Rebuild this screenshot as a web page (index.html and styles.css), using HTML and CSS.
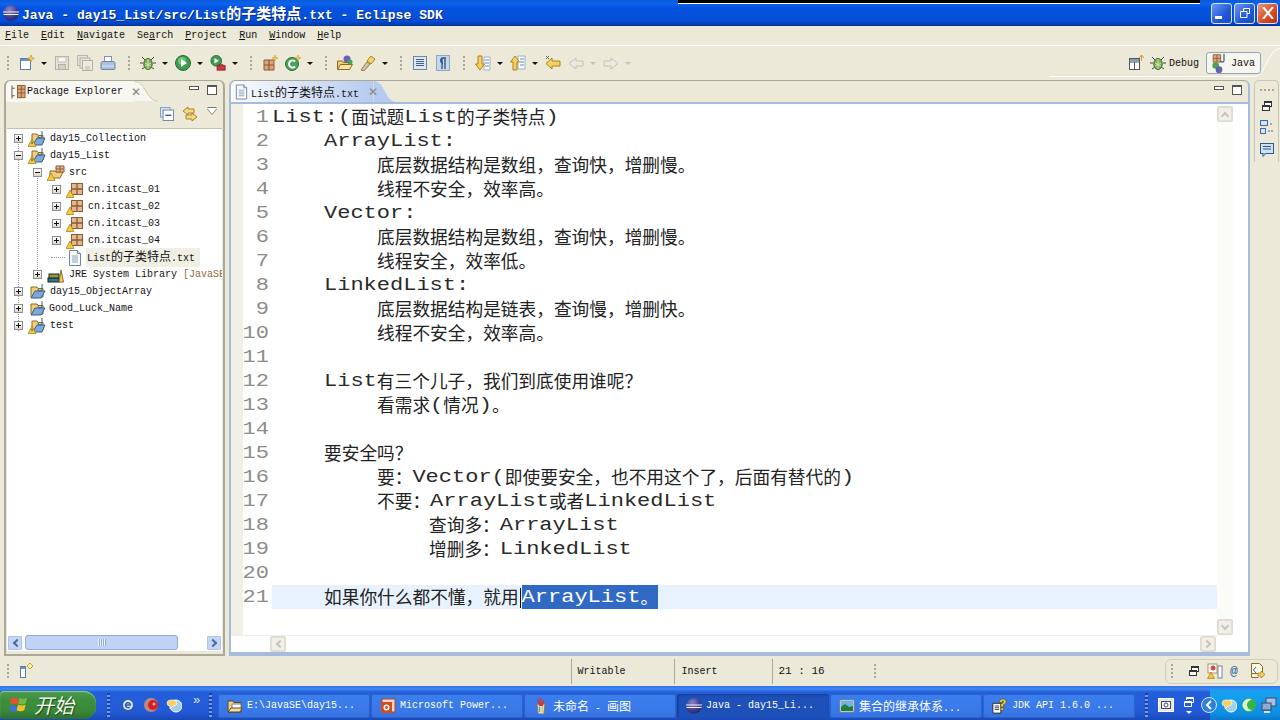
FILE: index.html
```html
<!DOCTYPE html>
<html lang="zh-CN">
<head>
<meta charset="utf-8">
<title>Java - day15_List/src/List的子类特点.txt - Eclipse SDK</title>
<link rel="stylesheet" href="styles.css">
</head>
<body>
<svg class="defs" width="0" height="0">
  <defs>
    <radialGradient id="globe" cx=".4" cy=".3" r=".8"><stop offset="0" stop-color="#8a88c8"/><stop offset=".6" stop-color="#3d3c90"/><stop offset="1" stop-color="#20205c"/></radialGradient>
    <symbol id="eclipse" viewBox="0 0 16 16"><circle cx="8" cy="8" r="7.800" fill="url(#globe)"/><path d="M0 7h16M.5 9.500h15" stroke="#f4f4ff" stroke-width="1.100"/></symbol>
    <symbol id="new" viewBox="0 0 16 16"><rect x="1.500" y="3.500" width="10" height="11" fill="#fff" stroke="#5c7fa8"/><rect x="2" y="4" width="9" height="2" fill="#6f93c0"/><path d="M12 0l1 2.500 2.500 1-2.500 1-1 2.500-1-2.500-2.500-1 2.500-1z" fill="#f5c93c" stroke="#b88a1a" stroke-width=".5"/></symbol>
    <symbol id="save" viewBox="0 0 16 16"><rect x="1.500" y="1.500" width="13" height="13" fill="#e6e4da" stroke="#b3b1a6"/><rect x="4" y="2" width="8" height="5" fill="#f7f6f1" stroke="#c0beb4"/><rect x="4.500" y="9.500" width="7" height="5" fill="#d2d0c6" stroke="#b3b1a6"/></symbol>
    <symbol id="saveall" viewBox="0 0 16 16"><rect x=".5" y=".5" width="10" height="10" fill="#e6e4da" stroke="#bbb9ae"/><rect x="3" y="3" width="10" height="10" fill="#e6e4da" stroke="#b3b1a6"/><rect x="5.500" y="5.500" width="10" height="10" fill="#ecebe3" stroke="#b3b1a6"/><rect x="8" y="11" width="5" height="4" fill="#d2d0c6"/></symbol>
    <symbol id="print" viewBox="0 0 16 16"><rect x="4.500" y="1.500" width="7" height="6" fill="#fff" stroke="#7f93ad"/><path d="M1 8.500q0-2 2-2h10q2 0 2 2v5q0 1-1 1H2q-1 0-1-1z" fill="#a9c0de" stroke="#6b86a8"/><path d="M2 11h12" stroke="#dfe9f5"/></symbol>
    <symbol id="bug" viewBox="0 0 16 16"><path d="M2 2l3 3M14 2l-3 3M0 8h3M13 8h3M2 14l3-2M14 14l-3-2" stroke="#444" stroke-width="1"/><ellipse cx="8" cy="9" rx="4.200" ry="5.500" fill="#7fae55" stroke="#3f6a2a"/><path d="M8 4v10M5 8l6 3M11 8l-6 3" stroke="#d3e4b5"/></symbol>
    <symbol id="run" viewBox="0 0 16 16"><circle cx="8" cy="8" r="7.500" fill="#3e9a4e" stroke="#2d6a3c"/><circle cx="7" cy="6" r="4" fill="#6fc27a"/><path d="M6 4l6 4-6 4z" fill="#fff"/></symbol>
    <symbol id="runext" viewBox="0 0 18 18"><circle cx="7" cy="6.500" r="6" fill="#3e9a4e" stroke="#2d6a3c"/><path d="M5 3.500l5 3-5 3z" fill="#fff"/><rect x="8" y="12" width="9" height="5" fill="#c93a3a" stroke="#8a2222"/><path d="M10.500 12v-1.500h4V12" fill="none" stroke="#8a2222"/></symbol>
    <symbol id="pkgnew" viewBox="0 0 16 16"><path d="M2 5h10v10H2z" fill="#d9a679" stroke="#8d5a32"/><path d="M7 5v10M2 10h10" stroke="#8d5a32" stroke-width="1.200"/><path d="M13 0l.8 2.200L16 3l-2.200.8L13 6l-.8-2.200L10 3l2.200-.8z" fill="#f5c93c" stroke="#b88a1a" stroke-width=".4"/></symbol>
    <symbol id="classnew" viewBox="0 0 16 16"><circle cx="7" cy="9" r="6.500" fill="#4aa35a" stroke="#2d6a3c"/><path d="M10 6.500a3.500 3.500 0 1 0 0 5" fill="none" stroke="#fff" stroke-width="2"/><path d="M13 0l.8 2.200L16 3l-2.200.8L13 6l-.8-2.200L10 3l2.200-.8z" fill="#f5c93c" stroke="#b88a1a" stroke-width=".4"/></symbol>
    <symbol id="opentype" viewBox="0 0 16 16"><path d="M.5 14.500V6h5l1 1.500h6v7z" fill="#f2cd7b" stroke="#8d6a22"/><path d="M.5 14.500l3-5h12l-3 5z" fill="#fbe3a6" stroke="#8d6a22"/><circle cx="10" cy="4" r="3.500" fill="#6a62a8"/><circle cx="13" cy="7" r="2.500" fill="#4aa35a"/></symbol>
    <symbol id="torch" viewBox="0 0 16 16"><path d="M1 15l6-8 3 2-6 7z" fill="#d8c8a0" stroke="#8a7a55"/><path d="M7 6l4-5 4 3-4 5z" fill="#f5d36b" stroke="#a98520"/></symbol>
    <symbol id="block" viewBox="0 0 16 16"><rect x="1.500" y="1.500" width="13" height="13" fill="#dfe6f0" stroke="#6b86a8"/><path d="M4 4.500h8M4 6.500h8M4 8.500h8M4 10.500h8" stroke="#3e5f8a"/></symbol>
    <symbol id="para" viewBox="0 0 16 16"><rect x="1.500" y=".5" width="13" height="15" fill="#c7d6e8" stroke="#8ea6c4"/><path d="M7 14V3M10 14V3M11 3H7a3 3 0 0 0 0 5h1" fill="none" stroke="#2e5a8c" stroke-width="1.400"/></symbol>
    <symbol id="nextann" viewBox="0 0 16 16"><path d="M9 2h6v13H9z" fill="#fff" stroke="#9fb0c6"/><path d="M10 5h4M10 8h4M10 11h4" stroke="#5b87bd"/><path d="M3 1h4v8h2.500L5 15 .5 9H3z" fill="#f5cf62" stroke="#a98520"/></symbol>
    <symbol id="prevann" viewBox="0 0 16 16"><path d="M8 1h7v13H8z" fill="#fff" stroke="#9fb0c6"/><path d="M10 4h4M10 7h4M10 10h4" stroke="#5b87bd"/><path d="M3 15h4V7h2.500L5 1 .5 7H3z" fill="#f5cf62" stroke="#a98520"/></symbol>
    <symbol id="lastedit" viewBox="0 0 16 16"><path d="M7 3v3h8v5H7v3L1 8.500z" fill="#f5cf62" stroke="#a98520"/><path d="M1 1l3 3M4 1L1 4" stroke="#4a7a3a"/></symbol>
    <symbol id="back" viewBox="0 0 16 16"><path d="M8 3v3h7v5H8v3L1 8.500z" fill="#eceae0" stroke="#c5c3b8"/></symbol>
    <symbol id="forward" viewBox="0 0 16 16"><path d="M8 3v3H1v5h7v3l7-5.500z" fill="#eceae0" stroke="#c5c3b8"/></symbol>
    <symbol id="openpersp" viewBox="0 0 16 16"><rect x="1.500" y="3.500" width="10" height="11" fill="#fff" stroke="#555"/><path d="M1.500 7h10M6.500 7v7.500" stroke="#555"/><rect x="2" y="4" width="9" height="2.500" fill="#7b9cc6"/><path d="M13.500 0v6M11 3l2.500-3L16 3" fill="none" stroke="#d69c1d"/></symbol>
    <symbol id="javapersp" viewBox="0 0 18 24"><path d="M2 2h9v9H2z" fill="#d9a679" stroke="#8d5a32"/><path d="M6.500 2v9M2 6.500h9" stroke="#8d5a32"/><circle cx="5" cy="15" r="4" fill="#4aa35a"/><circle cx="9" cy="20" r="4" fill="#6a62a8"/><path d="M15 1v8a2 2 0 0 1-4 0" fill="none" stroke="#4a5f80" stroke-width="1.500"/></symbol>
    <symbol id="pkgtree" viewBox="0 0 16 16"><path d="M1 1v14M1 4h3M1 12h3" stroke="#555"/><rect x="7" y="1" width="8" height="13" fill="#d9a679" stroke="#8d5a32"/><path d="M11 1v13M7 5h8M7 9h8" stroke="#8d5a32"/></symbol>
    <symbol id="doc" viewBox="0 0 16 16"><path d="M2.500.5h8l3 3v12h-11z" fill="#fafafa" stroke="#6f86a3"/><path d="M10.500.5v3h3" fill="#dfe6f0" stroke="#6f86a3"/><path d="M5 6h6M5 8h6M5 10h6M5 12h6" stroke="#8ea4c0"/></symbol>
    <symbol id="projw" viewBox="0 0 18 16"><path d="M4 7V3h5l1 1.500h5V12H4z" fill="#f2cd7b" stroke="#8d6a22"/><path d="M6 12l3-5h8l-3 7H6z" fill="#7da9d8" stroke="#35608f"/><path d="M14 0v5a2 2 0 0 1-4 0" fill="none" stroke="#35608f"/><path d="M4 8l4 7.500H0z" fill="#f5c93c" stroke="#a47a10" stroke-width=".7"/><path d="M4 10.500v2.500" stroke="#5a3f00"/></symbol>
    <symbol id="proj" viewBox="0 0 18 16"><path d="M3 13V3h6l1 1.500h5V13z" fill="#f2cd7b" stroke="#8d6a22"/><path d="M3 14l4-7h10l-4 7z" fill="#7da9d8" stroke="#35608f"/><path d="M14 0v5a2 2 0 0 1-4 0" fill="none" stroke="#35608f"/></symbol>
    <symbol id="srcw" viewBox="0 0 18 16"><path d="M3 13V6h5l1 1h7l-3 6z" fill="#f2cd7b" stroke="#8d6a22"/><path d="M9 1h8v6H9zM13 1v6M9 4h8" fill="#e3b891" stroke="#8d5a32"/><path d="M4 8l4 7.500H0z" fill="#f5c93c" stroke="#a47a10" stroke-width=".7"/></symbol>
    <symbol id="pkgw" viewBox="0 0 18 16"><rect x="5.500" y="1.500" width="11" height="11" fill="#e3b891" stroke="#8d5a32"/><path d="M11 1.500v11M5.500 7h11" stroke="#8d5a32" stroke-width="1.300"/><path d="M4 8l4 7.500H0z" fill="#f5c93c" stroke="#a47a10" stroke-width=".7"/></symbol>
    <symbol id="books" viewBox="0 0 16 16"><rect x="0" y="11" width="11" height="4" fill="#2e7a8c" stroke="#222"/><rect x="1" y="7" width="10" height="4" fill="#8a9a3a" stroke="#222"/><path d="M11 15l2-12 2.500 12z" fill="#f5cf62" stroke="#8d6a22"/></symbol>
    <symbol id="collapse" viewBox="0 0 16 16"><rect x=".5" y=".5" width="11" height="11" fill="#d5e1f0" stroke="#7f9cc0"/><rect x="3.500" y="3.500" width="12" height="12" fill="#fff" stroke="#5c7fa8"/><path d="M6 9.500h7" stroke="#2e5a8c" stroke-width="1.500"/></symbol>
    <symbol id="link" viewBox="0 0 16 16"><path d="M6 1L1 5l5 4V7h6V3H6z" fill="#f5d98a" stroke="#a98520"/><path d="M10 7l5 4-5 4v-2H4V9h6z" fill="#f5d98a" stroke="#a98520"/></symbol>
    <symbol id="restore" viewBox="0 0 12 12"><rect x="3.500" y="1.500" width="7" height="5" fill="#fff" stroke="#333"/><rect x="1.500" y="5.500" width="7" height="5" fill="#fff" stroke="#333"/><path d="M1.500 6.500h7M3.500 2.500h7" stroke="#333"/></symbol>
    <symbol id="restorew" viewBox="0 0 12 12"><path d="M3.500 4V1.500h7v5H8.500M1.500 5.500h7v5h-7z" fill="none" stroke="#fff"/><path d="M1.500 6.500h7M3.500 2.500h7" stroke="#fff"/></symbol>
    <symbol id="outline" viewBox="0 0 16 16"><rect x="1.500" y="1.500" width="7" height="5" fill="#d5e3f5" stroke="#3e6ea8"/><rect x="1.500" y="9.500" width="5" height="5" fill="#d5e3f5" stroke="#3e6ea8"/><path d="M9 12h5M11 5h3" stroke="#3e6ea8" stroke-dasharray="2 1"/></symbol>
    <symbol id="task" viewBox="0 0 16 16"><rect x="1.500" y="1.500" width="13" height="10" fill="#cfe0f5" stroke="#2e5a8c"/><path d="M4 4.500h8M4 7h8" stroke="#2e5a8c"/><path d="M4 11.500v3l3-3" fill="#cfe0f5" stroke="#2e5a8c"/></symbol>
    <symbol id="fastnew" viewBox="0 0 16 16"><rect x="1.500" y="3.500" width="5" height="11" fill="#fff" stroke="#5c7fa8"/><rect x="2" y="4" width="4" height="2" fill="#6f93c0"/><path d="M11 0l3 3-3 3-3-3z" fill="#fff3b0" stroke="#d0a020"/></symbol>
    <symbol id="prog" viewBox="0 0 16 16"><rect x="1" y="1" width="9" height="9" fill="#fff" stroke="#b09060"/><circle cx="6" cy="5" r="2.500" fill="#d84a4a"/><rect x="11" y="3" width="4" height="12" fill="#fff" stroke="#6f86a3"/><path d="M4 9l3.500 6.500H.5z" fill="#f5c93c" stroke="#a47a10" stroke-width=".7"/></symbol>
    <symbol id="changes" viewBox="0 0 16 16"><path d="M1.500.5h8l3 3v7h-11zM1.500 10.500v4h7" fill="#fffce8" stroke="#8a6a20"/><path d="M6 4L3.500 7 6 10" fill="none" stroke="#3e6ea8"/><path d="M8 10h3V8l4 3.500L11 15v-2H8z" fill="#f5cf62" stroke="#a98520" stroke-width=".8"/></symbol>
    <symbol id="xp" viewBox="0 0 20 20"><path d="M1 6q4-2 8 0l-1 6q-4-2-8 0z" fill="#e8522f" transform="translate(0 -2)"/><path d="M10 3q4 2 8 0l-1.500 6q-4 2-8 0z" fill="#73b843"/><path d="M0 12q4-2 8 0l-1 6q-4-2-8 0z" fill="#3f6fd8"/><path d="M8.500 10q4 2 8 0L15 16q-4 2-8 0z" fill="#f5c21b"/></symbol>
    <symbol id="ie" viewBox="0 0 16 16"><rect x="1" y="2" width="13" height="13" fill="#2d5cb5" rx="2"/><circle cx="8" cy="8" r="5" fill="#dce9fa"/><path d="M5.500 8h5a2.500 2.500 0 1 0-.8 2" fill="none" stroke="#2d5cb5" stroke-width="1.500"/></symbol>
    <symbol id="redball" viewBox="0 0 16 16"><circle cx="8" cy="8" r="7" fill="#b98a80"/><circle cx="10" cy="8" r="5" fill="#d81e24"/><circle cx="11" cy="7" r="1.500" fill="#ffb0b0"/></symbol>
    <symbol id="msg" viewBox="0 0 16 16"><circle cx="10" cy="9" r="6" fill="#9fd0f0" stroke="#fff"/><path d="M1 6q0-3 4-3h2q4 0 4 3t-4 3L4 12V9Q1 9 1 6z" fill="#f5cf62" stroke="#fff" stroke-width=".6"/></symbol>
    <symbol id="foldertb" viewBox="0 0 16 16"><path d="M1 14V3h5l1 1.500h7V14z" fill="#ecd08a" stroke="#5b4a20"/><path d="M5 6h9v7H5z" fill="#fff" stroke="#7f7f7f"/><path d="M1 14l3-4h11l-2 4z" fill="#f5dc9e" stroke="#5b4a20"/></symbol>
    <symbol id="ppt" viewBox="0 0 16 16"><rect x="2" y="1" width="13" height="13" fill="#e8d5c8" stroke="#b7471c"/><rect x="1" y="4" width="11" height="11" fill="#d14d1d"/><circle cx="6.500" cy="9.500" r="3" fill="#fff"/><circle cx="6.500" cy="9.500" r="1.400" fill="#d14d1d"/></symbol>
    <symbol id="paint" viewBox="0 0 16 16"><path d="M4 6h8l-1 10H5z" fill="#d8d8d8" stroke="#777"/><path d="M5 1l2 7M8 0v8M11 2L9 8" stroke="#d8342a" stroke-width="1.500"/><path d="M6 9h1v5H6z" fill="#4aa35a"/><path d="M9 9h1v5H9z" fill="#f5c21b"/></symbol>
    <symbol id="pic" viewBox="0 0 16 16"><rect x="1" y="2" width="14" height="12" fill="#fff" stroke="#888"/><rect x="2" y="3" width="12" height="6" fill="#6fb4e0"/><path d="M2 13V9l4-3 4 3 4-1v5z" fill="#1f7d3d"/></symbol>
    <symbol id="help" viewBox="0 0 18 18"><path d="M1 6h9v11H1z" fill="#fff" stroke="#222"/><path d="M3 9h5M3 11h5M3 13h5" stroke="#333"/><path d="M8 5q0-4 4-4t4 3.500q0 2-3 3v2.500h-3V6.500q3-.5 3-2 0-1-1-1t-1 1.500zM10 11h3v3h-3z" fill="#f5d020" stroke="#222" stroke-width=".5"/></symbol>
    <symbol id="ql" viewBox="0 0 16 16"><rect x=".5" y="1.500" width="15" height="13" fill="#e8e8e8" stroke="#fff"/><rect x="3.500" y="4.500" width="9" height="7" fill="#fff" stroke="#3a4a6a"/><circle cx="8" cy="8" r="2" fill="none" stroke="#3a4a6a"/></symbol>
    <symbol id="trayback" viewBox="0 0 16 16"><circle cx="8" cy="8" r="7.500" fill="#2f7fe0" stroke="#fff" stroke-width=".8"/><path d="M10 4L6 8l4 4" fill="none" stroke="#fff" stroke-width="2"/></symbol>
    <symbol id="greenball" viewBox="0 0 16 16"><circle cx="8" cy="8" r="7" fill="#36b24a"/><path d="M11 3a6 6 0 1 0 0 10 5 5 0 0 1 0-10z" fill="#d6f5d0"/></symbol>
    <symbol id="net" viewBox="0 0 16 16"><rect x="5" y="1" width="10" height="8" fill="#a8c0e8" stroke="#3a4a6a"/><rect x="1" y="6" width="9" height="7" fill="#8fa9d8" stroke="#3a4a6a"/><path d="M3 15h6" stroke="#ddd" stroke-width="2"/></symbol>
  </defs>
</svg>

<div class="window">
  <header class="titlebar">
    <svg class="ic16 title-icon"><use href="#eclipse"/></svg>
    <span class="title-text">Java - day15_List/src/List<span class="title-cjk">的子类特点</span>.txt - Eclipse SDK</span>
    <div class="capture-line"></div>
    <div class="winbtns">
      <button class="winbtn"><span class="glyph-min"></span></button>
      <button class="winbtn"><svg class="glyph-res" viewBox="0 0 12 12"><path d="M4.500 4.500V1.500h6v5H8M1.500 4.500h6.500v6h-6.500z" fill="none" stroke="#fff"/></svg></button>
      <button class="winbtn close"><svg class="glyph-res" viewBox="0 0 12 12"><path d="M1 0l10 12M11 0L1 12" stroke="#fff" stroke-width="2"/></svg></button>
    </div>
  </header>

  <nav class="menubar">
    <span><u>F</u>ile</span><span><u>E</u>dit</span><span><u>N</u>avigate</span><span>Se<u>a</u>rch</span><span><u>P</u>roject</span><span><u>R</u>un</span><span><u>W</u>indow</span><span><u>H</u>elp</span>
  </nav>

  <div class="toolbar">
    <i class="grip"></i>
    <span class="tool"><svg class="ic16"><use href="#new"/></svg></span><span class="dd"></span>
    <span class="tool"><svg class="ic16"><use href="#save"/></svg></span>
    <span class="tool"><svg class="ic16"><use href="#saveall"/></svg></span>
    <span class="tool"><svg class="ic16"><use href="#print"/></svg></span>
    <i class="grip wide"></i>
    <span class="tool"><svg class="ic16"><use href="#bug"/></svg></span><span class="dd"></span>
    <span class="tool"><svg class="ic16"><use href="#run"/></svg></span><span class="dd"></span>
    <span class="tool"><svg class="ic16"><use href="#runext"/></svg></span><span class="dd"></span>
    <i class="grip wide"></i>
    <span class="tool"><svg class="ic16"><use href="#pkgnew"/></svg></span>
    <span class="tool"><svg class="ic16"><use href="#classnew"/></svg></span><span class="dd"></span>
    <i class="grip wide"></i>
    <span class="tool"><svg class="ic16"><use href="#opentype"/></svg></span>
    <span class="tool"><svg class="ic16"><use href="#torch"/></svg></span><span class="dd"></span>
    <i class="grip wide"></i>
    <span class="tool"><svg class="ic16"><use href="#block"/></svg></span>
    <span class="tool"><svg class="ic16"><use href="#para"/></svg></span>
    <i class="grip wide"></i>
    <span class="tool"><svg class="ic16"><use href="#nextann"/></svg></span><span class="dd"></span>
    <span class="tool"><svg class="ic16"><use href="#prevann"/></svg></span><span class="dd"></span>
    <span class="tool"><svg class="ic16"><use href="#lastedit"/></svg></span>
    <span class="tool"><svg class="ic16"><use href="#back"/></svg></span><span class="dd off"></span>
    <span class="tool"><svg class="ic16"><use href="#forward"/></svg></span><span class="dd off"></span>

    <div class="persp">
      <svg class="persp-curve" viewBox="0 0 420 32"><path d="M190 30.500H393C407 30.500 407 2.500 421 2.500" fill="none" stroke="#fff"/></svg>
      <svg class="ic16"><use href="#openpersp"/></svg>
      <span class="persp-debug"><svg class="ic16"><use href="#bug"/></svg>Debug</span>
      <span class="persp-java"><svg class="ic-java"><use href="#javapersp"/></svg>Java</span>
    </div>
  </div>

  <main class="workspace">
    <section class="panel left">
      <div class="tabrow">
        <div class="tab plain"><svg class="ic16"><use href="#pkgtree"/></svg><span>Package Explorer</span><b class="x">✕</b></div>
        <svg class="tabcurve" viewBox="0 0 24 22"><path d="M0 0C12 0 12 21 24 21H0z" fill="#f8f7f1"/><path d="M0 .5C12 .5 12 21 24 21" fill="none" stroke="#cdcbbc"/></svg>
        <div class="winctl"><i class="ctl-min"></i><i class="ctl-max"></i></div>
      </div>
      <div class="viewbar">
        <svg class="ic-collapse"><use href="#collapse"/></svg>
        <svg class="ic16"><use href="#link"/></svg>
        <i class="viewmenu"></i>
      </div>
      <div class="tree">
        <i class="guide g-root"></i><i class="guide g-src"></i>
        <div class="row d0"><i class="exp plus"></i><svg class="ic-tree"><use href="#projw"/></svg><span>day15_Collection</span></div>
        <div class="row d0"><i class="exp"></i><svg class="ic-tree"><use href="#projw"/></svg><span>day15_List</span></div>
        <div class="row d1"><i class="exp"></i><svg class="ic-tree"><use href="#srcw"/></svg><span>src</span></div>
        <div class="row d2"><i class="exp plus"></i><svg class="ic-tree"><use href="#pkgw"/></svg><span>cn.itcast_01</span></div>
        <div class="row d2"><i class="exp plus"></i><svg class="ic-tree"><use href="#pkgw"/></svg><span>cn.itcast_02</span></div>
        <div class="row d2"><i class="exp plus"></i><svg class="ic-tree"><use href="#pkgw"/></svg><span>cn.itcast_03</span></div>
        <div class="row d2"><i class="exp plus"></i><svg class="ic-tree"><use href="#pkgw"/></svg><span>cn.itcast_04</span></div>
        <div class="row d2"><i class="exp none"></i><svg class="ic-tree"><use href="#doc"/></svg><span class="sel">List<span class="cjk">的子类特点</span>.txt</span></div>
        <div class="row d1"><i class="exp plus"></i><svg class="ic-tree"><use href="#books"/></svg><span>JRE System Library <em>[JavaSE</em></span></div>
        <div class="row d0"><i class="exp plus"></i><svg class="ic-tree"><use href="#proj"/></svg><span>day15_ObjectArray</span></div>
        <div class="row d0"><i class="exp plus"></i><svg class="ic-tree"><use href="#proj"/></svg><span class="tight">Good_Luck_Name</span></div>
        <div class="row d0"><i class="exp plus"></i><svg class="ic-tree"><use href="#projw"/></svg><span>test</span></div>
      </div>
      <div class="hscroll">
        <i class="sb-btn"><b class="chev left-chev"></b></i>
        <i class="sb-thumb"><b class="thumb-grip"></b></i>
        <i class="sb-btn end"><b class="chev right-chev"></b></i>
      </div>
    </section>

    <section class="panel right">
      <div class="tabrow">
        <div class="tab active"><svg class="ic16"><use href="#doc"/></svg><span>List<span class="cjk">的子类特点</span>.txt</span><b class="x">✕</b></div>
        <svg class="tabcurve" viewBox="0 0 24 22"><path d="M0 0C12 0 12 22 24 22H0z" fill="#b6cbef"/></svg>
        <div class="winctl"><i class="ctl-min"></i><i class="ctl-max"></i></div>
      </div>
      <div class="editor">
        <div class="edit-main">
          <div class="codearea">
            <div class="line"><b>1</b><p class="code"><span class="l">List:(</span>面试题<span class="l">List</span>的子类特点<span class="l">)</span></p></div>
            <div class="line"><b>2</b><p class="code t1"><span class="l">ArrayList:</span></p></div>
            <div class="line"><b>3</b><p class="code t2">底层数据结构是数组，查询快，增删慢。</p></div>
            <div class="line"><b>4</b><p class="code t2">线程不安全，效率高。</p></div>
            <div class="line"><b>5</b><p class="code t1"><span class="l">Vector:</span></p></div>
            <div class="line"><b>6</b><p class="code t2">底层数据结构是数组，查询快，增删慢。</p></div>
            <div class="line"><b>7</b><p class="code t2">线程安全，效率低。</p></div>
            <div class="line"><b>8</b><p class="code t1"><span class="l">LinkedList:</span></p></div>
            <div class="line"><b>9</b><p class="code t2">底层数据结构是链表，查询慢，增删快。</p></div>
            <div class="line"><b>10</b><p class="code t2">线程不安全，效率高。</p></div>
            <div class="line"><b>11</b><p class="code"></p></div>
            <div class="line"><b>12</b><p class="code t1"><span class="l">List</span>有三个儿子，我们到底使用谁呢？</p></div>
            <div class="line"><b>13</b><p class="code t2">看需求<span class="l">(</span>情况<span class="l">)</span>。</p></div>
            <div class="line"><b>14</b><p class="code"></p></div>
            <div class="line"><b>15</b><p class="code t1">要安全吗？</p></div>
            <div class="line"><b>16</b><p class="code t2">要：<span class="l">Vector(</span>即使要安全，也不用这个了，后面有替代的<span class="l">)</span></p></div>
            <div class="line"><b>17</b><p class="code t2">不要：<span class="l">ArrayList</span>或者<span class="l">LinkedList</span></p></div>
            <div class="line"><b>18</b><p class="code t3">查询多：<span class="l">ArrayList</span></p></div>
            <div class="line"><b>19</b><p class="code t3">增删多：<span class="l">LinkedList</span></p></div>
            <div class="line"><b>20</b><p class="code"></p></div>
            <div class="line"><b>21</b><p class="code t1 current">如果你什么都不懂，就用<span class="caret"></span><span class="select"><span class="l">ArrayList</span>。</span></p></div>
          </div>
          <div class="vscroll">
            <i class="sb-btn off"><b class="chev up-chev"></b></i>
            <i class="sb-btn off down"><b class="chev down-chev"></b></i>
          </div>
        </div>
        <div class="hscroll edit-h">
          <i class="sb-btn off"><b class="chev left-chev"></b></i>
          <i class="sb-btn off end"><b class="chev right-chev"></b></i>
        </div>
      </div>
    </section>

    <aside class="fastview">
      <i class="fv-grip"></i>
      <svg class="ic12"><use href="#restore"/></svg>
      <svg class="ic16"><use href="#outline"/></svg>
      <svg class="ic16"><use href="#task"/></svg>
    </aside>
  </main>

  <footer class="status">
    <i class="grip"></i>
    <svg class="ic16 fast-new"><use href="#fastnew"/></svg>
    <span class="st writable">Writable</span>
    <span class="st insert">Insert</span>
    <span class="st pos">21 : 16</span>
    <i class="grip st-grip"></i>
    <div class="trimright">
      <i class="grip"></i>
      <svg class="ic12"><use href="#restore"/></svg>
      <svg class="ic16"><use href="#prog"/></svg>
      <span class="at">@</span>
      <svg class="ic16"><use href="#changes"/></svg>
    </div>
  </footer>

  <div class="taskbar">
    <div class="start"><svg class="ic-start"><use href="#xp"/></svg><span>开始</span></div>
    <i class="tgrip first"></i>
    <div class="quick">
      <svg class="ic16"><use href="#ie"/></svg>
      <svg class="ic16"><use href="#redball"/></svg>
      <svg class="ic16"><use href="#msg"/></svg>
      <span class="more">»</span>
    </div>
    <i class="tgrip mid"></i>
    <div class="tasks">
      <div class="task"><svg class="ic16"><use href="#foldertb"/></svg><span>E:\JavaSE\day15...</span></div>
      <div class="task"><svg class="ic16"><use href="#ppt"/></svg><span>Microsoft Power...</span></div>
      <div class="task"><svg class="ic16"><use href="#paint"/></svg><span><span class="cjk">未命名</span> - <span class="cjk">画图</span></span></div>
      <div class="task on"><svg class="ic16"><use href="#eclipse"/></svg><span>Java - day15_Li...</span></div>
      <div class="task"><svg class="ic16"><use href="#pic"/></svg><span><span class="cjk">集合的继承体系</span>...</span></div>
      <div class="task"><svg class="ic16"><use href="#help"/></svg><span>JDK API 1.6.0 ...</span></div>
    </div>
    <i class="tgrip last"></i>
    <div class="tb-extra">
      <svg class="ic16"><use href="#ql"/></svg>
      <div class="tb-restore"><svg class="ic12"><use href="#restorew"/></svg><i class="tb-arrow"></i></div>
    </div>
    <div class="tray">
      <svg class="ic16 tray-back"><use href="#trayback"/></svg>
      <svg class="ic16"><use href="#msg"/></svg>
      <svg class="ic16"><use href="#greenball"/></svg>
      <svg class="ic16"><use href="#net"/></svg>
    </div>
  </div>
</div>
</body>
</html>
```
FILE: styles.css
```css
* { box-sizing: border-box; }
html, body { margin: 0; padding: 0; width: 1280px; height: 720px; overflow: hidden; }
body { font-family: "Liberation Mono", "Noto Sans CJK SC", monospace; font-size: 10px; color: #111; background: #ece9d8; }
.defs { position: absolute; }
svg { display: block; flex: none; }
i, b, em { font-style: normal; font-weight: normal; }
.ic16 { width: 16px; height: 16px; }
.ic12 { width: 12px; height: 12px; }
.cjk { font-size: 12px; font-family: "Noto Sans CJK SC", sans-serif; }
.window { width: 1280px; height: 720px; display: flex; flex-direction: column; }

/* title bar */
.titlebar { height: 26px; flex: none; display: flex; align-items: center; padding-left: 3px; position: relative;
  background: linear-gradient(#0a5ad8 0, #0d63ee 4px, #0552e0 8px, #0350d8 20px, #0340b8 24px, #02309a 26px); }
.title-icon { margin-right: 3px; }
.title-text { font-size: 13.1px; font-weight: 700; color: #fff; white-space: pre; text-shadow: 1px 1px 0 #0a2a80; }
.title-cjk { font-size: 15px; }
.capture-line { position: absolute; left: 678px; top: 0; width: 522px; height: 3px; background: #000; box-shadow: 0 1px 0 #fff; }
.winbtns { margin-left: auto; display: flex; gap: 2px; padding-right: 2px; }
.winbtn { width: 21px; height: 21px; padding: 0; border: 1px solid #d8e4f8; border-radius: 3px; background: linear-gradient(135deg, #6f97f0, #2158d8 60%, #1a48c0); display: flex; align-items: center; justify-content: center; }
.winbtn.close { background: linear-gradient(135deg, #e89478, #d84a22 60%, #b83210); }
.glyph-min { width: 7px; height: 3px; background: #fff; margin: 9px 6px 0 0; }
.glyph-res { width: 12px; height: 12px; }

/* menu */
.menubar { height: 20px; flex: none; display: flex; align-items: center; padding-left: 5px; gap: 12px; border-bottom: 1px solid #fff; }

/* toolbar */
.toolbar { height: 32px; flex: none; display: flex; align-items: center; padding-top: 2px; position: relative; }
.grip { width: 2px; height: 15px; flex: none; margin-left: 7px; margin-right: 6.5px; background: repeating-linear-gradient(#a8a595 0 2px, transparent 2px 4px); }
.grip.wide { margin-left: 8px; margin-right: 7px; }
.tool { width: 23px; height: 24px; display: flex; align-items: center; justify-content: center; flex: none; }
.dd { width: 12px; height: 24px; flex: none; display: flex; align-items: center; padding-left: 1px; }
.dd::after { content: ""; border: 3px solid transparent; border-top: 3px solid #111; border-bottom: 0; margin-left: 1px; }
.dd.off::after { border-top-color: #c5c3b8; }
.persp { position: absolute; right: 0; top: 0; height: 32px; width: 420px; display: flex; align-items: center; padding: 2px 0 0 268px; }
.persp-curve { position: absolute; right: 0; top: 0; width: 420px; height: 32px; }
.persp-debug { display: flex; align-items: center; gap: 3px; margin-left: 6px; position: relative; }
.persp-java { width: 55px; height: 22px; margin-left: 7px; display: flex; align-items: center; gap: 4px; padding-left: 4px; border: 1px solid #8ea4b8; border-radius: 3px; background: #f6f5ee; position: relative; }
.ic-java { width: 16px; height: 20px; }

/* workspace */
.workspace { height: 578px; flex: none; display: flex; padding: 2px 0 0 4px; gap: 4px; }
.panel { display: flex; flex-direction: column; border: 1px solid #aca899; border-radius: 6px 6px 0 0; height: 576px; }
.panel.left { width: 221px; padding: 0 1px 3px 1px; border-width: 1px 2px 2px 2px; }
.panel.right { width: 1021px; border: 2px solid #a9bbdc; border-top: 1px solid #aca899; border-bottom-width: 4px; }
.tabrow { height: 21px; flex: none; display: flex; position: relative; margin: 0 -1px; }
.panel.right .tabrow { margin: 0; }
.tab { display: flex; align-items: center; flex: none; height: 21px; border-radius: 6px 0 0 0; position: relative; z-index: 1; }
.tab.plain { width: 128px; background: #f8f7f1; padding-left: 5px; gap: 1px; }
.tab.active { width: 142px; background: linear-gradient(90deg, #fbfcfe, #b6cbef); padding-left: 3px; gap: 2px; }
.tab span { white-space: nowrap; }
.tab .ic16 { width: 15px; height: 16px; }
.tabcurve { width: 24px; height: 21px; }
.x { margin-left: 7px; color: #8a8878; font-size: 12px; font-family: "DejaVu Sans", sans-serif; }
.winctl { margin-left: auto; display: flex; align-items: center; gap: 8px; padding: 0 6px 4px 0; }
.ctl-min { width: 10px; height: 4px; border: 1px solid #555; background: #fff; margin-top: -4px; }
.ctl-max { width: 10px; height: 10px; border: 1px solid #555; background: #fff; border-top-width: 2px; }
.viewbar { height: 27px; flex: none; display: flex; align-items: center; padding: 0 4px 3px 0; justify-content: flex-end; gap: 8px; border-bottom: 1px solid #c5c2b0; }
.ic-collapse { width: 14px; height: 14px; }
.viewmenu { width: 0; height: 0; border: 5px solid transparent; border-top: 6px solid #fff; border-bottom: 0; filter: drop-shadow(0 1px 0 #777) drop-shadow(0 -1px 0 #777); margin: 0 1px 6px 1px; }

/* tree */
.tree { flex: 1; background: #fff; padding-top: 1px; overflow: hidden; position: relative; }
.row { height: 17px; display: flex; align-items: center; white-space: nowrap; position: relative; }
.d0 { padding-left: 7px; }
.d1 { padding-left: 26px; }
.d2 { padding-left: 45px; }
.exp { width: 9px; height: 9px; flex: none; border: 1px solid #8a8f98; background: linear-gradient(#fff, #dcd8c8); position: relative; margin-right: 5px; }
.exp::before { content: ""; position: absolute; left: 1px; top: 3px; width: 5px; height: 1px; background: #111; }
.exp.plus::after { content: ""; position: absolute; left: 3px; top: 1px; width: 1px; height: 5px; background: #111; }
.exp.none { border: 0; background: none; }
.exp.none::before { left: -1px; top: 4px; width: 14px; height: 0; background: none; border-top: 1px dotted #999; }
.ic-tree { width: 18px; height: 16px; margin-right: 4px; }
.row em { color: #8a6d3b; }
.tight { margin-left: -1px; }
.sel { background: #f0efe4; padding: 1px 5px 1px 1px; margin-left: -2px; line-height: 14px; }
.guide { position: absolute; width: 0; border-left: 1px dotted #999; }
.g-root { left: 11px; top: 12px; height: 190px; }
.g-src { left: 30px; top: 44px; height: 102px; }

/* scrollbars */
.hscroll { height: 16px; flex: none; background: #fff; display: flex; }
.sb-btn { width: 16px; height: 16px; flex: none; border: 1px solid #fff; border-radius: 2px; background: #c5d5f5; box-shadow: inset 0 0 0 1px #aec3ec; display: flex; align-items: center; justify-content: center; }
.sb-btn.off { background: #f1f0e8; box-shadow: inset 0 0 0 1px #e2e0d4; border-color: #dedccf; }
.sb-btn.end { margin-left: auto; }
.sb-thumb { width: 153px; margin-left: 2px; height: 15px; background: #c0d2f6; border: 1px solid #8fa9dc; border-radius: 3px; display: flex; align-items: center; justify-content: center; }
.thumb-grip { width: 8px; height: 7px; background: repeating-linear-gradient(90deg, #eef3fd 0 1px, #8fa9dc 1px 2px); }
.chev { width: 6px; height: 6px; border: solid #4a6ca8; border-width: 2px 0 0 2px; }
.off .chev { border-color: #c8c6ba; }
.left-chev { transform: rotate(-45deg); margin-left: 3px; }
.right-chev { transform: rotate(135deg); margin-right: 3px; }
.up-chev { transform: rotate(45deg); margin-top: 3px; }
.down-chev { transform: rotate(225deg); margin-bottom: 3px; }

/* editor */
.editor { flex: 1; display: flex; flex-direction: column; background: #fff; border-top: 2px solid #a9bbdc; min-height: 0; }
.edit-main { flex: 1; display: flex; min-height: 0; padding: 0 15px 0 12px; background: linear-gradient(90deg, #f1f0e6 12px, #fff 12px); }
.codearea { flex: 1; padding-top: 1px; border-bottom: 1px solid #f0efe8; background: #fff; overflow: hidden; }
.line { height: 24px; display: flex; align-items: center; white-space: nowrap; position: relative; }
.line b { width: 26px; flex: none; text-align: right; font-size: 22px; color: #8c8c8c; line-height: 24px; transform: translateY(1px) scaleY(.82); white-space: nowrap; direction: rtl; }
.code { margin: 0 0 0 3px; padding: 0 0 2px 0; font-family: "Noto Sans CJK SC", sans-serif; font-size: 17.7px; line-height: 22px; height: 24px; flex: 1; color: #222; display: flex; align-items: center; }
.l { display: inline-block; font-family: "Liberation Mono", monospace; font-size: 22px; transform: translateY(2px) scaleY(.82); color: #2a2a2a; }
.t1 { padding-left: 52px; }
.t2 { padding-left: 105px; }
.t3 { padding-left: 157px; }
.current { background: #e8f2fe; }
.select { display: flex; align-items: center; align-self: flex-start; background: #316ac5; color: #fff; height: 24px; margin-left: 1px; padding-bottom: 2px; }
.select .l { color: #fff; }
.caret { width: 1px; height: 20px; background: #111; margin: 4px 0 0 1px; }
.vscroll { width: 16px; flex: none; display: flex; flex-direction: column; padding: 2px 0 1px 0; background: #fbfbf8; }
.vscroll .sb-btn.down { margin-top: auto; }
.edit-h { padding: 0 32px 0 39px; background: #fff; }

/* fast view */
.fastview { width: 25px; height: 82px; flex: none; border: 1px solid #c9c6b4; border-radius: 5px 5px 0 0; border-bottom: 0; display: flex; flex-direction: column; align-items: center; gap: 7px; padding-top: 8px; }
.fv-grip { width: 14px; height: 2px; background: repeating-linear-gradient(90deg, #a8a595 0 2px, transparent 2px 4px); margin-bottom: 2px; }

/* status */
.status { height: 30px; flex: none; display: flex; align-items: center; position: relative; }
.fast-new { margin-left: 3px; }
.st { height: 25px; display: flex; align-items: center; border-left: 1px solid #aca899; padding-left: 6px; }
.writable { margin-left: 536px; width: 103px; }
.insert { width: 98px; padding-left: 7px; }
.pos { width: 88px; padding-left: 6px; font-size: 11px; }
.st-grip { margin-left: 14px; margin-right: 0; }
.trimright { margin-left: auto; margin-right: 2px; width: 113px; height: 25px; border: 1px solid #d0cdbc; border-radius: 6px; display: flex; align-items: center; gap: 7px; }
.trimright .grip { margin: 0 8px 0 5px; }
.at { color: #3a6ea8; font-size: 13px; font-weight: 700; width: 13px; }

/* taskbar */
.taskbar { height: 34px; flex: none; display: flex; align-items: center; padding-top: 3px; background: linear-gradient(#2d74e6 0, #3f87f0 3px, #245edb 6px, #2359d6 26px, #1a4ab8 34px); color: #fff; }
.start { width: 96px; height: 28px; flex: none; display: flex; align-items: center; gap: 5px; padding-left: 10px; border-radius: 4px 12px 12px 4px; background: linear-gradient(#4f9c4f, #3d8f3d 30%, #3a8a3a 70%, #2f6e2f); box-shadow: inset 0 1px 1px #8fc88f; }
.ic-start { width: 19px; height: 19px; }
.start span { font-family: "Noto Sans CJK SC", sans-serif; font-size: 20px; font-style: italic; color: #f5f5ee; line-height: 1; text-shadow: 1px 1px 1px #1d4a1d; }
.tgrip { width: 3px; height: 24px; flex: none; background: repeating-linear-gradient(#1a3f9c 0 2px, #6f9cf0 2px 4px); }
.tgrip.first { margin: 0 5px 0 11px; }
.tgrip.mid { margin: 0 6px 0 1px; }
.tgrip.last { margin: 0 10px 0 10px; }
.quick { width: 93px; display: flex; align-items: center; gap: 7px; flex: none; padding-left: 5px; }
.more { font-size: 13px; margin: -10px 0 0 4px; font-family: "Liberation Sans", sans-serif; color: #dce8fc; }
.tasks { display: flex; gap: 1px; flex: none; margin-top: 2px; }
.task { width: 152px; height: 24px; display: flex; align-items: center; gap: 4px; padding-left: 9px; border-radius: 3px; background: linear-gradient(#3a7fee, #3a78e8 70%, #3570de); box-shadow: inset 0 0 0 1px #2d62c8; white-space: nowrap; overflow: hidden; }
.task.on { background: #1d50b8; box-shadow: inset 1px 1px 2px #123a8c; }
.tb-extra { display: flex; align-items: center; gap: 9px; flex: none; }
.tb-restore { display: flex; flex-direction: column; align-items: center; gap: 3px; }
.tb-arrow { border: 3px solid transparent; border-top: 3px solid #fff; border-bottom: 0; }
.tray { margin-left: auto; width: 70px; height: 31px; display: flex; align-items: center; gap: 4px; background: linear-gradient(#1b9cf0, #15a0f0 20%, #0d8fe4 80%, #0a78cc); }
.tray-back { margin-left: -9px; }
```
